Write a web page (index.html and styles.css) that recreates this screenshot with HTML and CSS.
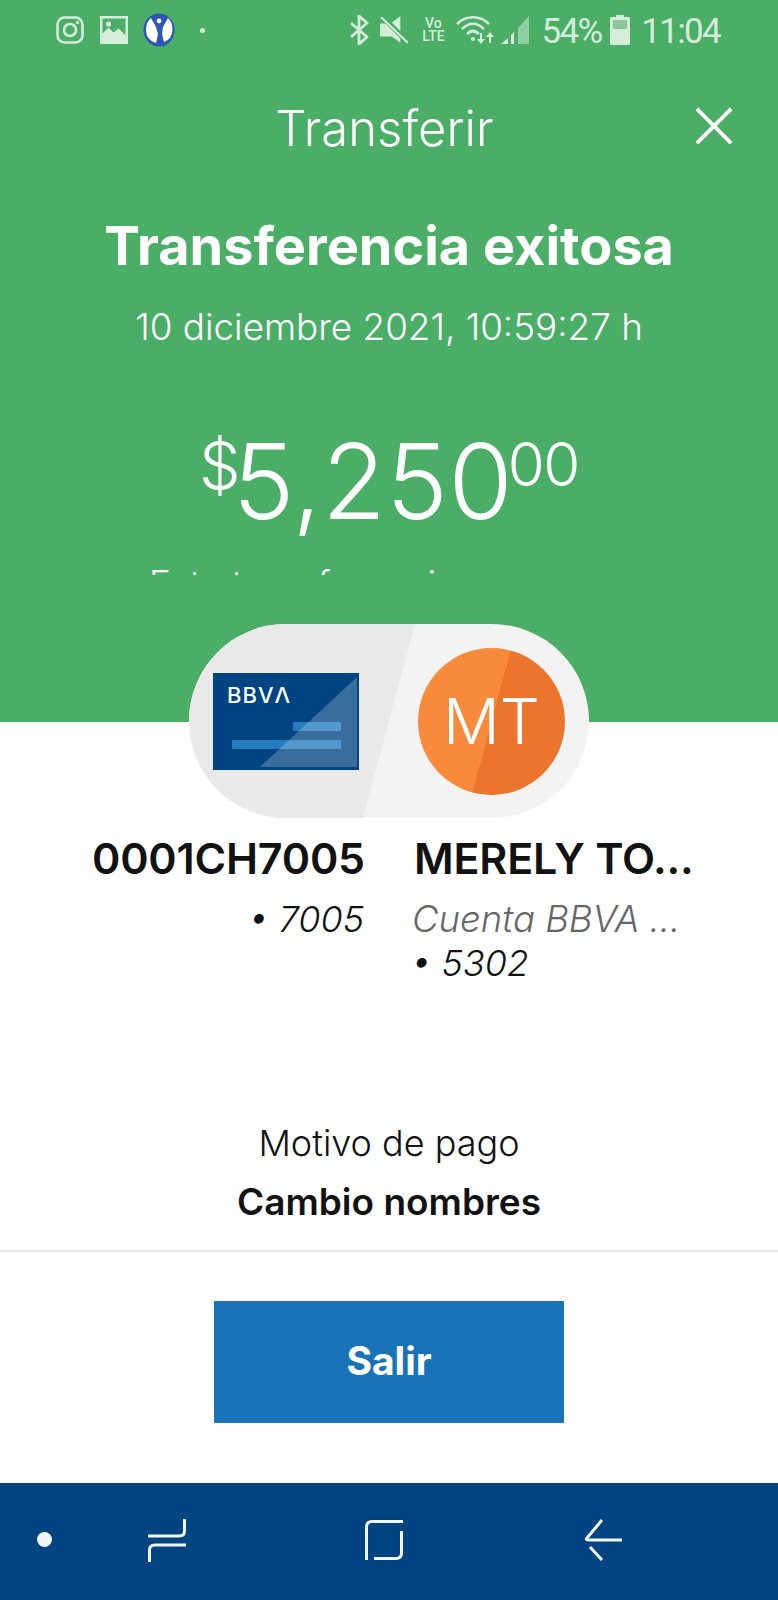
FILE: index.html
```html
<!DOCTYPE html>
<html lang="es">
<head>
<meta charset="utf-8">
<title>Transferir</title>
<link rel="stylesheet" href="styles.css">
</head>
<body>
<main class="app">
  <section class="hero">
    <div class="status">
      <svg class="ic ic-insta" viewBox="0 0 28 28"><rect x="1.500" y="1.500" width="25" height="25" rx="7" fill="none" stroke="#d6ecdb" stroke-width="2.600"/><circle cx="14" cy="14" r="6" fill="none" stroke="#d6ecdb" stroke-width="2.600"/><circle cx="21.500" cy="6.500" r="1.700" fill="#d6ecdb"/></svg>
      <svg class="ic ic-photo" viewBox="0 0 28 28"><path fill="#d6ecdb" fill-rule="evenodd" d="M0 0h28v28H0zM2.500 2.500v15l6-6 5 5 5-4 7 6.500V2.500z"/><circle cx="8.500" cy="8" r="2.600" fill="#d6ecdb"/></svg>
      <svg class="ic ic-person" viewBox="0 0 32 34"><ellipse cx="16" cy="17" rx="15.500" ry="16.500" fill="#2f55b5"/><path fill="#fff" d="M8 5 13 14 15 21 13 30Q3 27 3 17 3 9 8 5zM25 5 20 14 19 21 21 29Q29 26 29.500 17 29.500 9 25 5z"/><circle cx="16" cy="8" r="2.400" fill="#fff"/></svg>
      <span class="status-dot"></span>
      <span class="status-gap"></span>
      <svg class="ic ic-bt" viewBox="0 0 20 30"><path fill="none" stroke="#d6ecdb" stroke-width="2.800" stroke-linejoin="round" d="M2 8 18 22 10 29V1l8 7L2 22"/></svg>
      <svg class="ic ic-mute" viewBox="0 0 30 30"><path fill="#d6ecdb" d="M12 8 20 2V16zM1 9H6L20 23V27L12 21H1z"/><path stroke="#d6ecdb" stroke-width="2" d="M2 3 27 27"/></svg>
      <span class="volte"><span>Vo</span><span>LTE</span></span>
      <svg class="ic ic-wifi" viewBox="0 0 38 30"><g fill="none" stroke="#d6ecdb" stroke-width="2.600"><path d="M1 9C10 0 24 0 33 9"/><path d="M6 14C13 7 21 7 28 14"/><path d="M11 19C15 15 19 15 23 19"/></g><circle cx="17" cy="24" r="2" fill="#d6ecdb"/><path stroke="#d6ecdb" stroke-width="2" d="M25 18v9M34 28v-9"/><path fill="#d6ecdb" d="M21 24h8l-4 5zM30 22h8l-4-5z"/></svg>
      <svg class="ic ic-signal" viewBox="0 0 30 30"><path fill="#d6ecdb" d="M1 29 8 23v6zM11 20l3-3v12h-3z"/><path fill="#d6ecdb" opacity=".5" d="M18 13 29 1v28H18z"/></svg>
      <span class="status-text pct">54%</span>
      <svg class="ic ic-batt" viewBox="0 0 20 30"><path fill="#d6ecdb" d="M6 0h8v2h4a2 2 0 0 1 2 2v24a2 2 0 0 1-2 2H2a2 2 0 0 1-2-2V4a2 2 0 0 1 2-2h4z"/><rect x="3" y="5" width="14" height="9" fill="#8cc79b"/></svg>
      <span class="status-text clock">11:04</span>
    </div>

    <header class="topbar">
      <h1 class="topbar-title">Transferir</h1>
      <svg class="close" viewBox="0 0 40 40"><path stroke="#fff" stroke-width="4" d="M2 2 38 38M38 2 2 38"/></svg>
    </header>

    <h2 class="result">Transferencia exitosa</h2>
    <p class="stamp">10 diciembre 2021, 10:59:27 h</p>

    <p class="amount"><span class="cur">$</span><span class="whole">5,25<span class="whole-end">0</span></span><span class="cents">00</span></p>
    <div class="clip"><p class="clip-text">Esta transferencia</p></div>
  </section>

  <section class="parties">
    <div class="pill">
      <div class="pill-left"></div>
      <svg class="card" viewBox="0 0 146 97">
        <rect width="146" height="97" fill="#004481"/>
        <rect x="19" y="67" width="109" height="9" fill="#2a86ca" opacity=".85"/>
        <rect x="80" y="49" width="48" height="9" fill="#2a86ca" opacity=".85"/>
        <path fill="#fff" opacity=".22" d="M47 94 144 4v90z"/>
        <text x="14" y="30" class="card-logo">BBVΛ</text>
      </svg>
      <div class="avatar"><span class="avatar-text">MT</span></div>
    </div>
    <div class="names">
      <div class="party party-from">
        <div class="party-name">0001CH7005</div>
        <div class="party-num">• 7005</div>
      </div>
      <div class="party party-to">
        <div class="party-name">MERELY TO...</div>
        <div class="party-bank">Cuenta BBVA ...</div>
        <div class="party-num">• 5302</div>
      </div>
    </div>
    <div class="reason">
      <div class="reason-label">Motivo de pago</div>
      <div class="reason-value">Cambio nombres</div>
    </div>
  </section>

  <footer class="actions">
    <button class="exit" type="button">Salir</button>
  </footer>

  <nav class="softkeys">
    <span class="key-dot"></span>
    <svg class="key key-recent" viewBox="0 0 38 44"><path fill="none" stroke="#f2f5f9" stroke-width="3" d="M0 18H31Q36.500 18 36.500 13V1M38 27H7Q1.500 27 1.500 32V44"/></svg>
    <svg class="key key-home" viewBox="0 0 38 40"><path fill="none" stroke="#f2f5f9" stroke-width="3" d="M1.500 40V7Q1.500 1.500 7 1.500H38M36.500 11V33Q36.500 38.500 31 38.500H9"/></svg>
    <svg class="key key-back" viewBox="0 0 38 42"><path fill="none" stroke="#f2f5f9" stroke-width="3" d="M18 1 3 19Q1 21 5 21H38M6 28 18 41"/></svg>
  </nav>
</main>
</body>
</html>
```
FILE: styles.css
```css
* { box-sizing: border-box; }

html, body { margin: 0; padding: 0; background: #fff; }

body {
  font-family: Inter, "Liberation Sans", sans-serif;
  color: #121212;
}

p, h1, h2 { margin: 0; font-weight: normal; }

.app {
  width: 778px;
  height: 1600px;
  display: flex;
  flex-direction: column;
  overflow: hidden;
}

/* green header block */
.hero {
  height: 722px;
  flex: none;
  background: #4aae67;
  color: #fff;
  text-align: center;
}

.status {
  height: 60px;
  display: flex;
  align-items: center;
  padding: 0 58px 0 56px;
}

.ic { display: block; flex: none; }
.ic-insta { width: 28px; height: 28px; }
.ic-photo { width: 28px; height: 28px; margin-left: 16px; }
.ic-person { width: 32px; height: 34px; margin-left: 15px; }
.status-dot { width: 5px; height: 5px; border-radius: 50%; background: #d6ecdb; margin-left: 25px; }
.status-gap { flex: 1; }
.ic-bt { width: 20px; height: 30px; }
.ic-mute { width: 32px; height: 32px; margin-left: 10px; }
.volte {
  margin-left: 10px;
  width: 24px;
  display: flex;
  flex-direction: column;
  font: 500 14px/13px Roboto, sans-serif;
  color: #d6ecdb;
  align-items: center;
}
.ic-wifi { width: 38px; height: 30px; margin-left: 11px; }
.ic-signal { width: 30px; height: 30px; margin-left: 6px; }
.status-text {
  font: 400 35px/40px Roboto, sans-serif;
  letter-spacing: -1.7px;
  color: #d6ecdb;
  padding-top: 3px;
}
.pct { margin-left: 11px; }
.ic-batt { width: 20px; height: 30px; margin-left: 9px; }
.clock { margin-left: 11px; }

.topbar {
  position: relative;
  height: 76px;
  margin-top: 30px;
  padding-right: 9px;
  display: flex;
  align-items: center;
  justify-content: center;
}
.topbar-title { font-size: 49px; font-weight: 300; }
.close {
  position: absolute;
  right: 44px;
  top: 17px;
  width: 40px;
  height: 38px;
}

.result {
  margin-top: 47px;
  font-size: 54px;
  line-height: 66px;
  font-weight: 700;
}
.stamp {
  margin-top: 25px;
  font-size: 36.800px;
  line-height: 46px;
  font-weight: 300;
}

.amount {
  margin-top: 75px;
  height: 112px;
  display: flex;
  justify-content: center;
  align-items: flex-start;
  font-weight: 300;
}
.cur { font-size: 66px; line-height: 80px; letter-spacing: -8px; }
.whole { font-size: 104px; line-height: 112px; letter-spacing: .5px; }
.whole-end { letter-spacing: -5px; }
.cents { font-size: 60px; line-height: 78px; letter-spacing: -1.500px; }

/* sentence cut off by the scroll area */
.clip {
  height: 14px;
  margin-top: 24px;
  overflow: hidden;
}
.clip-text {
  padding-left: 149px;
  text-align: left;
  font-size: 37px;
  line-height: 46px;
  font-weight: 300;
}

/* accounts and payment reason */
.parties {
  flex: 1;
  margin-top: -98px;
  position: relative;
}
.pill {
  position: relative;
  width: 400px;
  height: 194px;
  margin-left: 189px;
  border-radius: 97px;
  background: #f3f3f3;
  overflow: hidden;
  display: flex;
  align-items: center;
  padding-left: 24px;
}
.pill-left {
  position: absolute;
  inset: 0;
  background: #e9e9e9;
  clip-path: polygon(0 0, 226px 0, 174px 100%, 0 100%);
}
.card { position: relative; width: 146px; height: 97px; flex: none; }
.card-logo { font: 500 22px Inter, sans-serif; letter-spacing: 1px; fill: #fff; }
.avatar {
  position: relative;
  margin-left: 59px;
  width: 147px;
  height: 147px;
  flex: none;
  border-radius: 50%;
  background: linear-gradient(105deg, #f78a3b 0 50%, #ec742d 50%);
  display: flex;
  align-items: center;
  justify-content: center;
}
.avatar-text { color: #fff; font-size: 63px; font-weight: 300; }

.names {
  display: grid;
  grid-template-columns: 272px 292px;
  column-gap: 50px;
  margin: 14px 0 0 92px;
}
.party-name { font-size: 43px; line-height: 52px; font-weight: 600; letter-spacing: -.2px; }
.party-from { text-align: right; }
.party-bank, .party-num { font-size: 36px; line-height: 44px; font-weight: 300; font-style: italic; }
.party-bank { font-size: 36.500px; color: #666; margin-left: -2px; }
.party-to .party-num { margin-left: -3px; }
.party-from .party-num, .party-bank { margin-top: 13px; }

.reason { margin-top: 133px; text-align: center; }
.reason-label { font-size: 36px; line-height: 50px; font-weight: 300; }
.reason-value { margin-top: 5px; font-size: 37px; line-height: 58px; font-weight: 600; }

.actions {
  flex: none;
  height: 233px;
  border-top: 2px solid #e6e6e6;
  display: flex;
  justify-content: center;
  padding-top: 49px;
}
.exit {
  width: 350px;
  height: 122px;
  border: 0;
  border-radius: 1px;
  padding: 0 0 3px;
  background: #1973b8;
  color: #fff;
  font: 700 39px Inter, sans-serif;
}

.softkeys {
  flex: none;
  height: 117px;
  background: #004481;
  display: flex;
  align-items: center;
  padding: 0 0 4px 37px;
}
.key-dot { width: 15px; height: 15px; border-radius: 50%; background: #f2f5f9; }
.key { display: block; flex: none; width: 38px; }
.key-recent { height: 44px; margin-left: 96px; }
.key-home { height: 40px; margin-left: 179px; }
.key-back { height: 42px; margin-left: 181px; }
```
